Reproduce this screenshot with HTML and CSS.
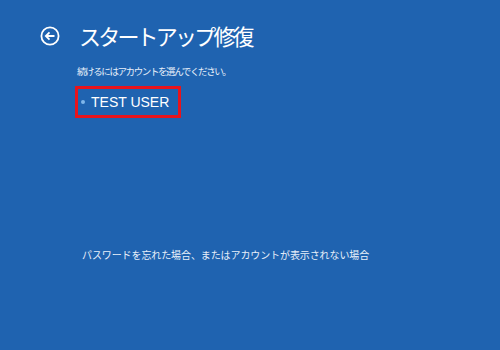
FILE: index.html
```html
<!DOCTYPE html>
<html lang="ja">
<head>
<meta charset="utf-8">
<link rel="stylesheet" href="styles.css">
</head>
<body>
<div class="screen">
  <div class="header">
    <svg class="back" width="20" height="20" viewBox="0 0 20 20">
      <circle cx="10" cy="10" r="8.6" fill="none" stroke="#fff" stroke-width="1.8"/>
      <path d="M14.5 10H6 M9.5 6.3 5.8 10 9.5 13.7" fill="none" stroke="#fff" stroke-width="1.8"/>
    </svg>
    <h1 class="title">スタートアップ修復</h1>
  </div>
  <p class="prompt">続けるにはアカウントを選んでください。</p>
  <div class="user">
    <span class="dot"></span>
    <span class="name">TEST USER</span>
  </div>
  <p class="forgot">パスワードを忘れた場合、またはアカウントが表示されない場合</p>
</div>
</body>
</html>
```
FILE: styles.css
```css
html, body {
  margin: 0;
  padding: 0;
  background: #1f63b0;
}
.screen {
  width: 500px;
  height: 350px;
  background: #1f63b0;
  color: #fff;
  font-family: "Noto Sans CJK JP", "Noto Sans", sans-serif;
  padding: 20px 0 0 40px;
  box-sizing: border-box;
}
.header {
  display: flex;
  align-items: center;
  gap: 19px;
  height: 31px;
}
.back { display: block; }
.title {
  margin: 0;
  font-size: 22px;
  font-weight: 400;
  letter-spacing: -2.8px;
  line-height: 31px;
}
.prompt {
  margin: 13px 0 0 37px;
  font-size: 9.5px;
  letter-spacing: -1.4px;
  line-height: 14px;
  color: #e8f0fa;
}
.user {
  margin: 8px 0 0 35px;
  width: 97px;
  height: 26px;
  border: 3px solid #e8141c;
  display: flex;
  align-items: center;
  gap: 6px;
  padding-left: 3px;
  box-sizing: content-box;
}
.dot {
  width: 4px;
  height: 4px;
  border-radius: 50%;
  background: #7fb6ea;
}
.name {
  font-family: "Liberation Sans", "Noto Sans", sans-serif;
  font-size: 14px;
  line-height: 20px;
}
.forgot {
  margin: 130px 0 0 42px;
  font-size: 10px;
  letter-spacing: -0.1px;
  line-height: 14px;
  color: #e8f0fa;
}
```
